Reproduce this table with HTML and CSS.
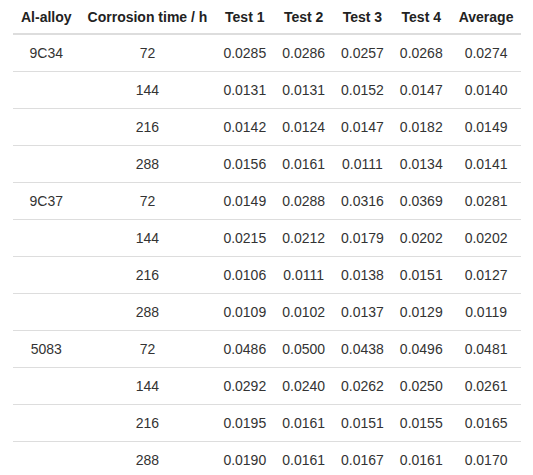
FILE: index.html
```html
<!DOCTYPE html>
<html>
<head>
<meta charset="utf-8">
<link rel="stylesheet" href="styles.css">
</head>
<body>
<div class="wrap">
<table class="data">
<thead>
<tr><th>Al-alloy</th><th>Corrosion time / h</th><th>Test 1</th><th>Test 2</th><th>Test 3</th><th>Test 4</th><th>Average</th></tr>
</thead>
<tbody>
<tr><td>9C34</td><td>72</td><td>0.0285</td><td>0.0286</td><td>0.0257</td><td>0.0268</td><td>0.0274</td></tr>
<tr><td></td><td>144</td><td>0.0131</td><td>0.0131</td><td>0.0152</td><td>0.0147</td><td>0.0140</td></tr>
<tr><td></td><td>216</td><td>0.0142</td><td>0.0124</td><td>0.0147</td><td>0.0182</td><td>0.0149</td></tr>
<tr><td></td><td>288</td><td>0.0156</td><td>0.0161</td><td>0.0111</td><td>0.0134</td><td>0.0141</td></tr>
<tr><td>9C37</td><td>72</td><td>0.0149</td><td>0.0288</td><td>0.0316</td><td>0.0369</td><td>0.0281</td></tr>
<tr><td></td><td>144</td><td>0.0215</td><td>0.0212</td><td>0.0179</td><td>0.0202</td><td>0.0202</td></tr>
<tr><td></td><td>216</td><td>0.0106</td><td>0.0111</td><td>0.0138</td><td>0.0151</td><td>0.0127</td></tr>
<tr><td></td><td>288</td><td>0.0109</td><td>0.0102</td><td>0.0137</td><td>0.0129</td><td>0.0119</td></tr>
<tr><td>5083</td><td>72</td><td>0.0486</td><td>0.0500</td><td>0.0438</td><td>0.0496</td><td>0.0481</td></tr>
<tr><td></td><td>144</td><td>0.0292</td><td>0.0240</td><td>0.0262</td><td>0.0250</td><td>0.0261</td></tr>
<tr><td></td><td>216</td><td>0.0195</td><td>0.0161</td><td>0.0151</td><td>0.0155</td><td>0.0165</td></tr>
<tr><td></td><td>288</td><td>0.0190</td><td>0.0161</td><td>0.0167</td><td>0.0161</td><td>0.0170</td></tr>
</tbody>
</table>
</div>
</body>
</html>
```
FILE: styles.css
```css
html, body { margin: 0; padding: 0; background: #fff; }
body { font-family: "Liberation Sans", Arial, sans-serif; font-size: 14px; color: #333; }
.wrap { padding: 0 12px 0 13px; }
.data { width: 508px; border-collapse: collapse; }
.data th { font-weight: bold; color: #222; text-align: center; line-height: 20px; padding: 7px 8px 6px; border-bottom: 2px solid #ddd; white-space: nowrap; }
.data td { text-align: center; line-height: 20px; padding: 8px 8px; border-top: 1px solid #ddd; white-space: nowrap; }
.data tbody tr:first-child td { border-top: 0; }
```
